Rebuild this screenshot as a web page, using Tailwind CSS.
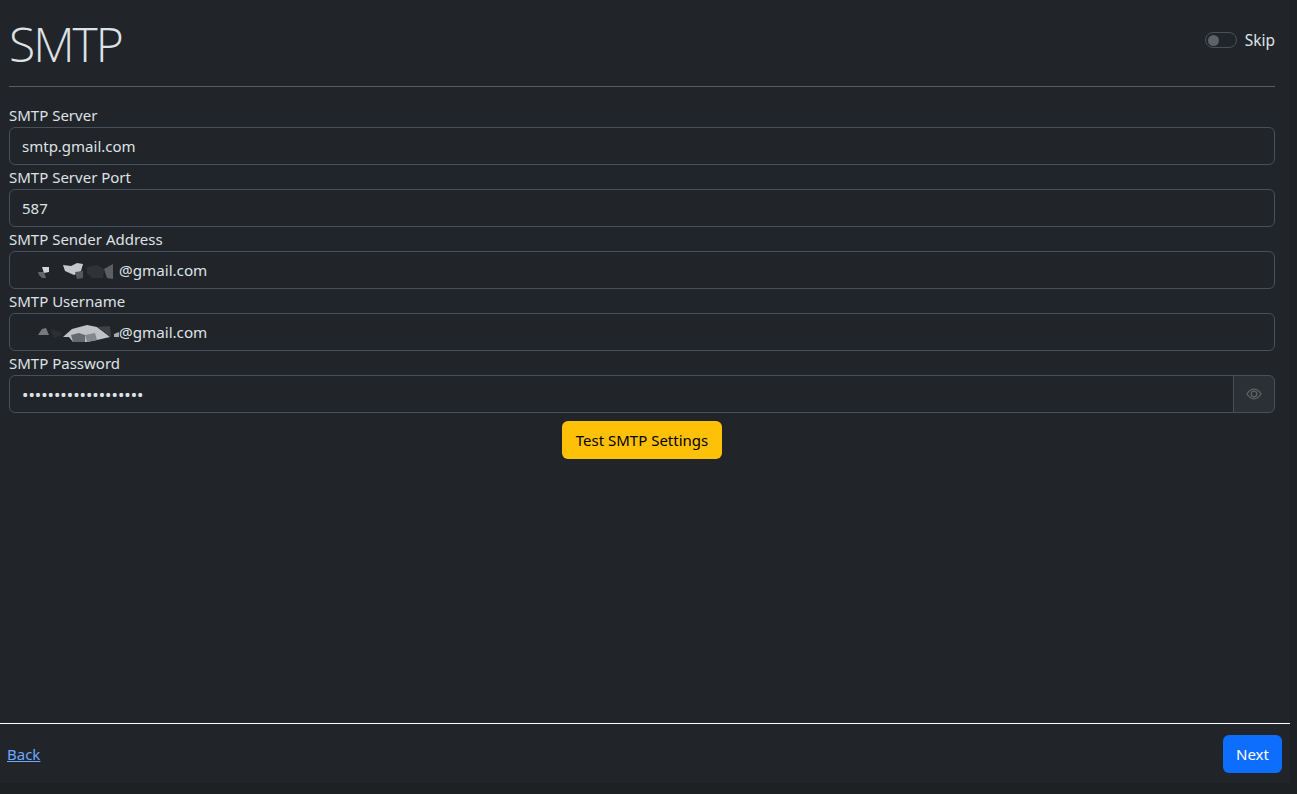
<!DOCTYPE html>
<html lang="en">
<head>
    <meta charset="UTF-8">
    <title>SMTP</title>
    <script src="https://cdn.jsdelivr.net/npm/@tailwindcss/browser@4"></script>
</head>
<body class="bg-[#1e2124] font-['Noto_Sans',sans-serif] text-[15px] text-[#dee2e6] overflow-hidden">
    <div class="w-[1290px] h-[783px] bg-[#212529] flex flex-col">
        <main class="flex-1 pl-[9px] pr-[15px]">
            <!-- Header -->
            <div class="h-[87px] border-b border-[#5a5d61] flex justify-between">
                <h1 class="text-[48px] leading-[58px] font-light pt-[15px] font-['Open_Sans',sans-serif] tracking-[-2px]">SMTP</h1>
                <div class="flex items-center gap-2 h-[24px] mt-[28px]">
                    <span class="w-8 h-4 rounded-full border border-[#495057] flex items-center pl-[2px]">
                        <span class="w-[11px] h-[11px] rounded-full bg-[#5e6266]"></span>
                    </span>
                    <label class="text-[15.5px] pt-px">Skip</label>
                </div>
            </div>

            <!-- Form -->
            <form class="pt-4">
                <label class="block h-6 leading-6">SMTP Server</label>
                <input type="text" value="smtp.gmail.com" class="block w-full h-[38px] px-3 bg-[#212529] border border-[#495057] rounded-md outline-none">

                <label class="block h-6 leading-6">SMTP Server Port</label>
                <input type="text" value="587" class="block w-full h-[38px] px-3 bg-[#212529] border border-[#495057] rounded-md outline-none">

                <label class="block h-6 leading-6">SMTP Sender Address</label>
                <div class="relative">
                    <input type="text" value="" class="block w-full h-[38px] px-3 bg-[#212529] border border-[#495057] rounded-md outline-none">
                    <svg class="absolute left-[28px] top-[10px]" width="80" height="20" viewBox="0 0 80 20">
                        <polygon points="5,6 12,6 12,11 7,12" fill="#d5d7d9"/>
                        <polygon points="1,11 7,11 9,17 5,17 2,14" fill="#62666a"/>
                        <polygon points="26,4 34,5 40,2 46,3 44,10 37,14 28,10" fill="#c6c9cb"/>
                        <polygon points="38,11 46,10 46,17 40,18" fill="#55595d"/>
                        <polygon points="50,6 60,4 67,8 66,17 55,17 50,12" fill="#2f3337"/>
                        <polygon points="67,8 76,3 76,18 70,17" fill="#5c6064"/>
                    </svg>
                    <span class="absolute left-[110px] inset-y-0 flex items-center text-[15.2px]">@gmail.com</span>
                </div>

                <label class="block h-6 leading-6">SMTP Username</label>
                <div class="relative">
                    <input type="text" value="" class="block w-full h-[38px] px-3 bg-[#212529] border border-[#495057] rounded-md outline-none">
                    <svg class="absolute left-[28px] top-[10px]" width="84" height="20" viewBox="0 0 84 20">
                        <polygon points="1,12 5,6 9,5 12,12" fill="#777b7e"/>
                        <polygon points="13,6 23,9 25,12 17,15" fill="#2c3034"/>
                        <polygon points="26,14 35,6 50,2 60,4 73,14 60,17 50,19 36,19 32,14" fill="#c0c3c5"/>
                        <polygon points="34,12 42,10 48,12 48,19 36,19" fill="#666a6e"/>
                        <polygon points="48,12 58,10 60,17 50,19" fill="#85888b"/>
                        <polygon points="60,4 73,3 74,14" fill="#3e4246"/>
                        <polygon points="77,11 82,9 82,14 77,14" fill="#a6a9ab"/>
                    </svg>
                    <span class="absolute left-[110px] inset-y-0 flex items-center text-[15.2px]">@gmail.com</span>
                </div>

                <label class="block h-6 leading-6">SMTP Password</label>
                <div class="flex">
                    <input type="password" value="abcdefghijklmnopqrs" class="block flex-1 h-[38px] px-3 bg-[#212529] border border-[#495057] rounded-l-md outline-none text-[17px]">
                    <span class="w-[42px] h-[38px] -ml-px bg-[#2b3035] border border-[#495057] rounded-r-md flex items-center justify-center">
                        <svg width="16" height="16" viewBox="0 0 16 16" fill="none" stroke="#5f6367" stroke-width="1.3">
                            <path d="M1 8 C3.5 4 6 3.2 8 3.2 S12.5 4 15 8 C12.5 12 10 12.8 8 12.8 S3.5 12 1 8 Z"/>
                            <circle cx="8" cy="8" r="2.8"/>
                        </svg>
                    </span>
                </div>

                <div class="flex justify-center pt-2">
                    <button type="button" class="w-[160px] h-[38px] bg-[#ffc107] text-black rounded-md">Test SMTP Settings</button>
                </div>
            </form>
        </main>

        <!-- Footer -->
        <footer class="h-[60px] border-t border-white flex justify-between items-center pl-[7px] pr-2 pt-px">
            <a href="#" class="text-[#6ea8fe] underline">Back</a>
            <button type="button" class="w-[59px] h-[38px] bg-[#0d6efd] text-white rounded-md">Next</button>
        </footer>
    </div>
</body>
</html>
